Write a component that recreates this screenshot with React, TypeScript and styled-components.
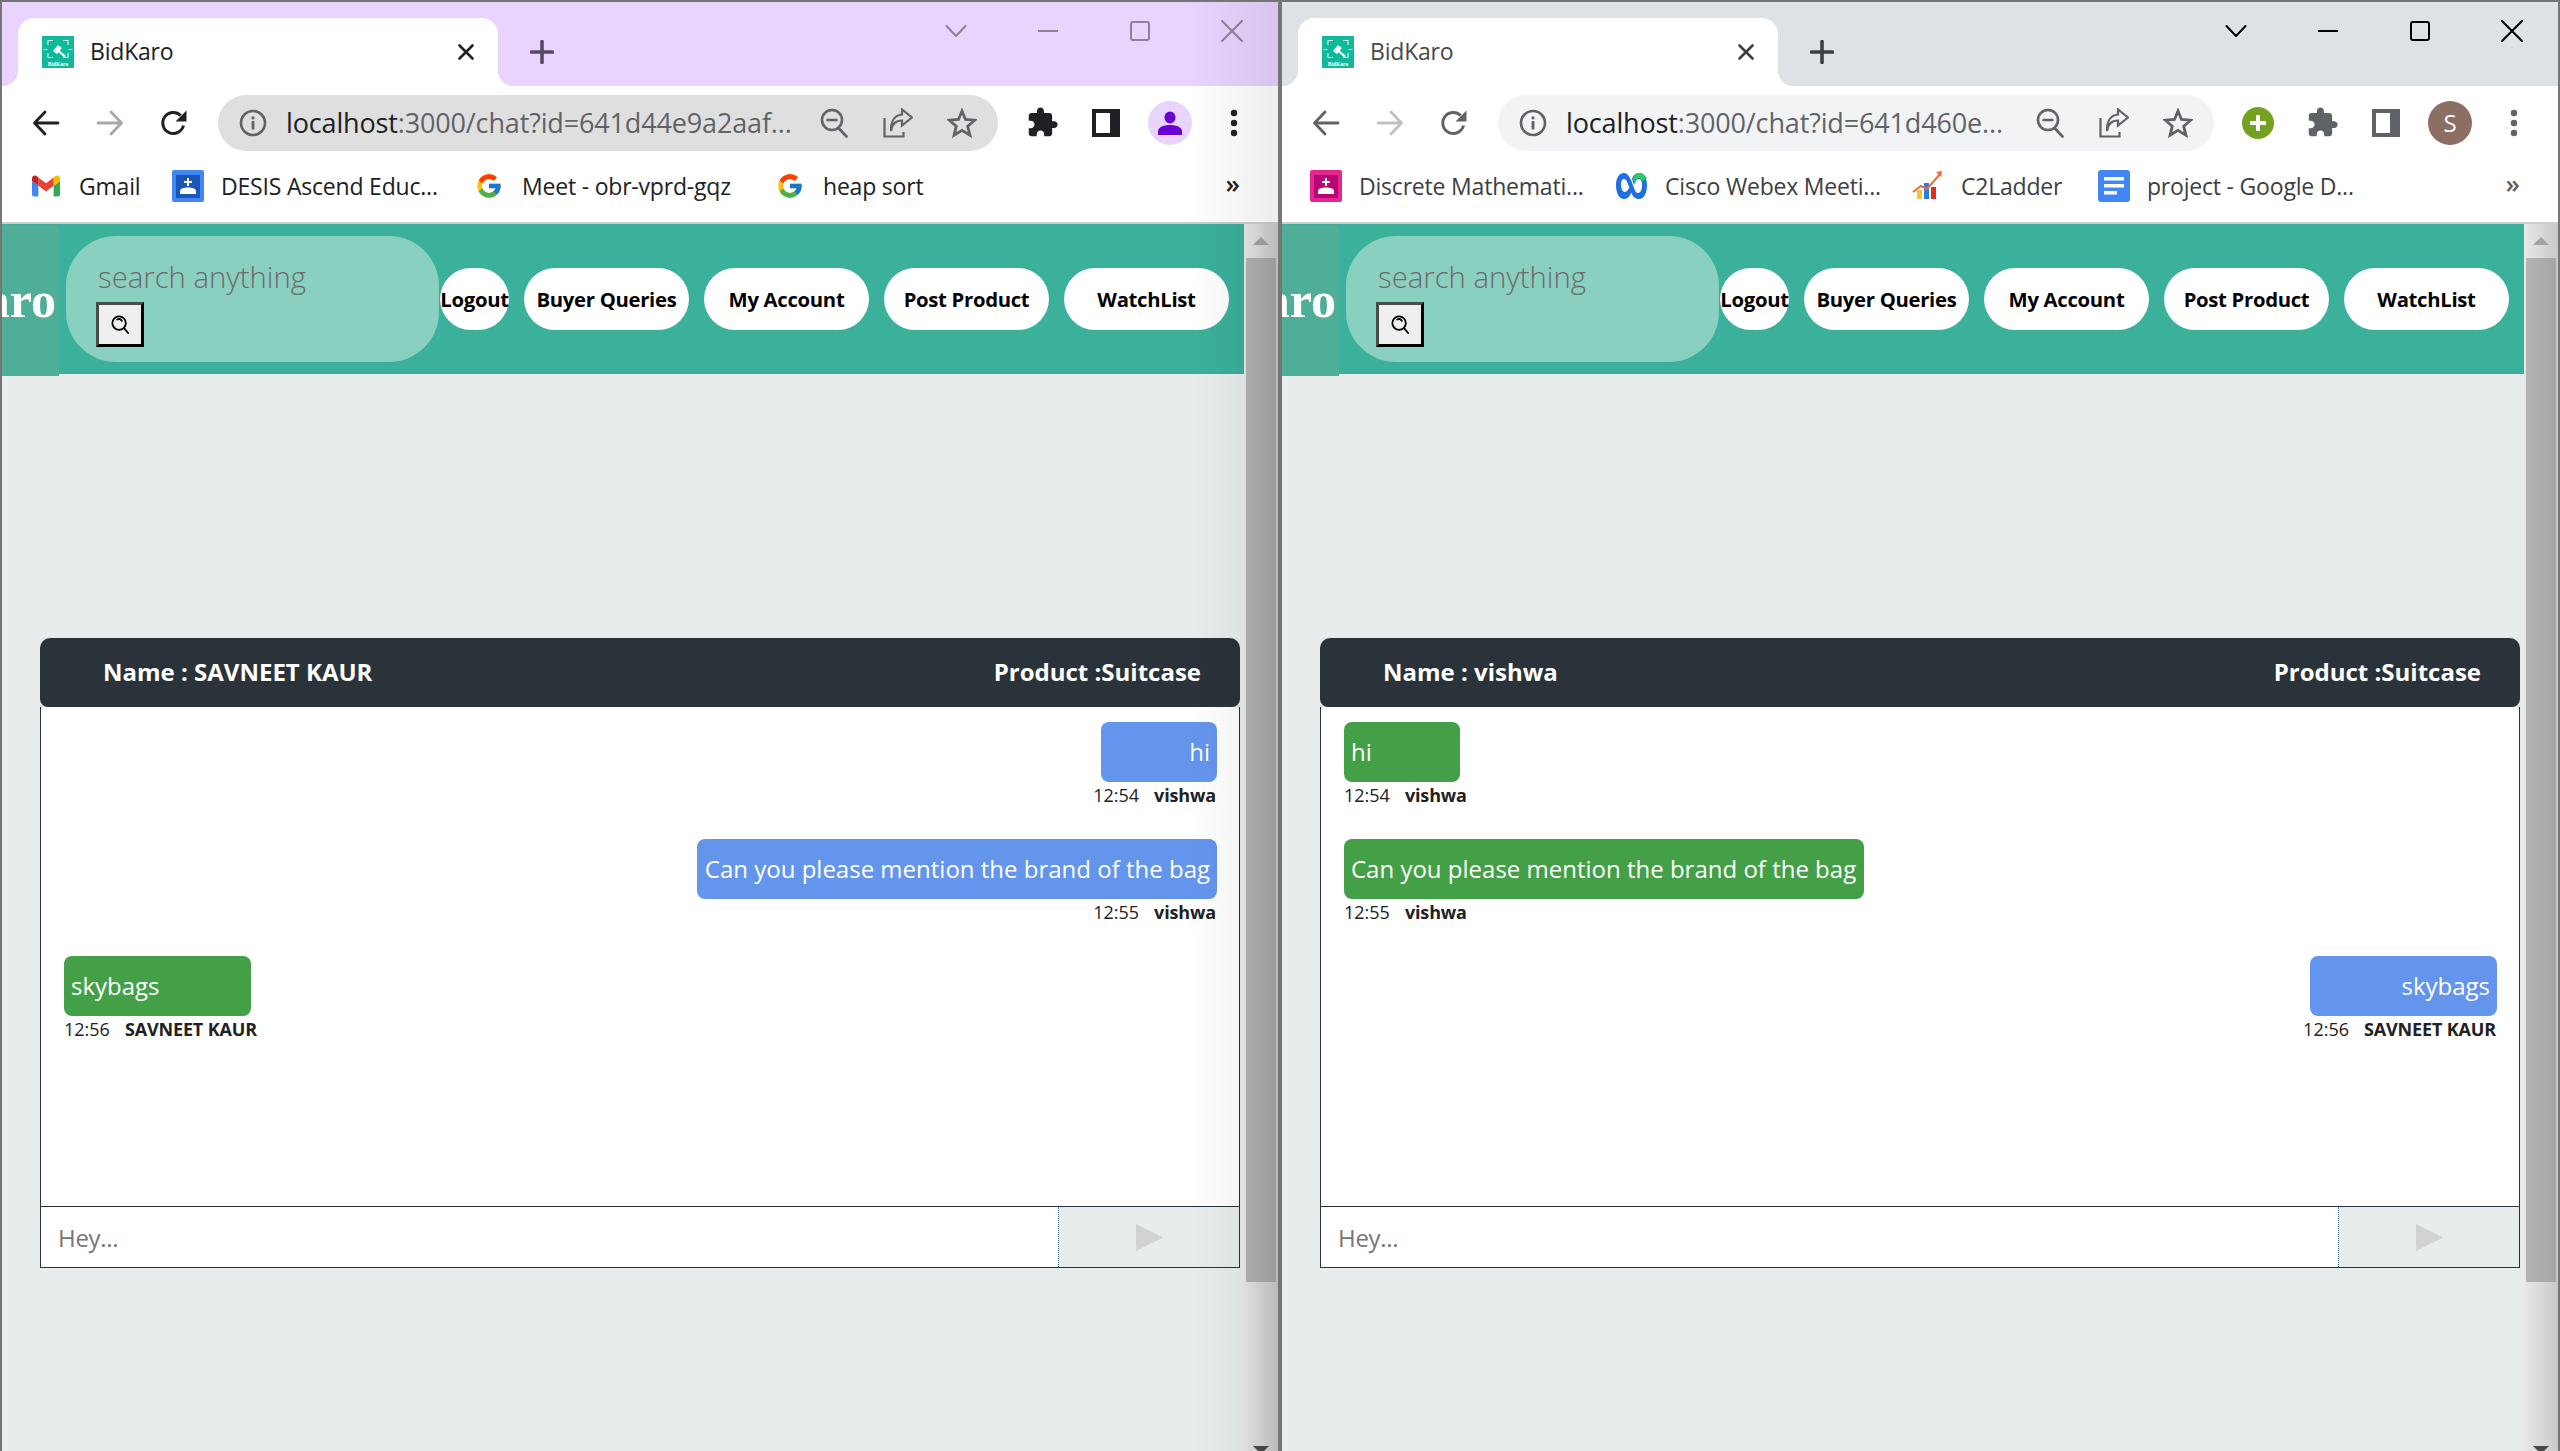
import React from 'react'
import styled, { createGlobalStyle } from 'styled-components'
import { FcGoogle } from 'react-icons/fc'

const GlobalStyle = createGlobalStyle`
  html, body {
    margin: 0;
    padding: 0;
    background: #e8ecec;
    overflow: hidden;
  }
  * {
    box-sizing: border-box;
  }
`

const UI_FONT = `"Open Sans", "Noto Sans", sans-serif`

const Desktop = styled.div`
  display: grid;
  grid-template-columns: 1280px 1280px;
  width: 2560px;
  height: 1451px;
  overflow: hidden;
  font-family: ${UI_FONT};
`

const Window = styled.div<{ $shaded?: boolean }>`
  position: relative;
  display: flex;
  flex-direction: column;
  height: 1451px;
  overflow: hidden;
  border: 2px solid #757575;
  border-bottom: none;

  &::after {
    content: '';
    display: ${(p) => (p.$shaded ? 'block' : 'none')};
    position: absolute;
    top: 0;
    right: 0;
    bottom: 0;
    width: 90px;
    pointer-events: none;
    background: linear-gradient(to right, rgba(0, 0, 0, 0), rgba(0, 0, 0, 0.07));
  }
`

const TitleBar = styled.div<{ $focused: boolean }>`
  display: flex;
  flex: 0 0 84px;
  align-items: flex-start;
  background: ${(p) => (p.$focused ? '#e8d4ff' : '#dee1e6')};
`

const Tab = styled.div<{ $focused: boolean }>`
  position: relative;
  display: flex;
  align-items: center;
  width: 480px;
  height: 68px;
  margin: 16px 0 0 16px;
  padding: 0 24px 0 24px;
  background: #fff;
  border-radius: 16px 16px 0 0;
  color: ${(p) => (p.$focused ? '#202124' : '#45494e')};

  &::before,
  &::after {
    content: '';
    position: absolute;
    bottom: 0;
    width: 16px;
    height: 16px;
  }
  &::before {
    left: -16px;
    background: radial-gradient(circle at 0 0, transparent 16px, #fff 16.5px);
  }
  &::after {
    right: -16px;
    background: radial-gradient(circle at 100% 0, transparent 16px, #fff 16.5px);
  }
`

const TabTitle = styled.span`
  flex: 1;
  margin-left: 16px;
  padding-bottom: 2px;
  font-size: 23px;
  letter-spacing: -0.2px;
`

const NewTab = styled.div`
  display: flex;
  align-items: center;
  justify-content: center;
  width: 40px;
  height: 68px;
  margin: 16px 0 0 24px;
`

const WindowControls = styled.div`
  display: flex;
  margin-left: auto;
`

const WindowControl = styled.div`
  display: flex;
  align-items: center;
  justify-content: center;
  width: 92px;
  height: 58px;
`

const Toolbar = styled.div`
  display: flex;
  flex: 0 0 73px;
  align-items: center;
  padding: 0 12px;
  background: #fff;
`

const ToolSlot = styled.div`
  display: flex;
  flex: 0 0 64px;
  align-items: center;
  justify-content: center;
  height: 56px;
`

const Omnibox = styled.div<{ $focused: boolean }>`
  display: flex;
  flex: 1;
  align-items: center;
  height: 56px;
  margin: 0 12px;
  padding: 0 4px 0 21px;
  border-radius: 28px;
  background: ${(p) => (p.$focused ? '#dfdfdf' : '#f1f3f4')};
`

const Url = styled.div`
  flex: 1;
  margin-left: 19px;
  color: #5f6368;
  font-size: 27px;
  letter-spacing: -0.15px;
  white-space: nowrap;
  overflow: hidden;

  b {
    font-weight: 400;
    color: #202124;
  }
`

const Avatar = styled.div<{ $bg: string }>`
  display: flex;
  align-items: center;
  justify-content: center;
  width: 44px;
  height: 44px;
  border-radius: 50%;
  background: ${(p) => p.$bg};
  color: #fff;
  font-size: 24px;
`

const GreenBadge = styled.div`
  display: flex;
  align-items: center;
  justify-content: center;
  width: 32px;
  height: 32px;
  border-radius: 50%;
  background: #74a11f;
`

const BookmarkBar = styled.div`
  display: flex;
  flex: 0 0 65px;
  align-items: center;
  padding: 0 0 10px 28px;
  background: #fff;
  border-bottom: 2px solid #cdcdcd;
`

const Bookmark = styled.div<{ $width: number; $focused: boolean }>`
  display: flex;
  flex: 0 0 ${(p) => p.$width}px;
  align-items: center;
  gap: 17px;
  color: ${(p) => (p.$focused ? '#202124' : '#3c4043')};
  font-size: 23px;
  letter-spacing: -0.2px;
  white-space: nowrap;
`

const BookmarkIcon = styled.div`
  display: flex;
  flex: 0 0 32px;
  align-items: center;
  justify-content: center;
  height: 32px;
`

const More = styled.div<{ $focused: boolean }>`
  margin-left: auto;
  margin-right: 38px;
  color: ${(p) => (p.$focused ? '#202124' : '#5f6368')};
  font-size: 26px;
  font-weight: 600;
  line-height: 1;
  padding-bottom: 6px;
`

const Viewport = styled.div`
  display: flex;
  flex: 1;
  min-height: 0;
  background: #e8ecec;
`

const Page = styled.div`
  flex: 0 0 1242px;
`

const Gutter = styled.div`
  flex: 0 0 34px;
  padding: 0 2px;
  background: linear-gradient(to right, #e9e9e9, #c9c9c9);
`

const ScrollButton = styled.div`
  display: flex;
  align-items: center;
  justify-content: center;
  height: 34px;
`

const ScrollArrow = styled.div<{ $down?: boolean }>`
  width: 0;
  height: 0;
  border-left: 8px solid transparent;
  border-right: 8px solid transparent;
  ${(p) =>
    p.$down ? 'border-top: 8px solid #4a4a4a;' : 'border-bottom: 8px solid #a3a3a3;'}
`

const ScrollThumb = styled.div`
  height: 1024px;
  background: linear-gradient(to right, #b4b4b4, #a6a6a6);
`

const ScrollTrack = styled.div`
  height: 151px;
`

const Header = styled.header`
  display: flex;
  align-items: center;
  height: 150px;
  background: #3bb09a;
`

const LogoBox = styled.div`
  display: flex;
  flex: 0 0 57px;
  align-self: flex-start;
  align-items: center;
  justify-content: flex-end;
  height: 150px;
  margin-top: 2px;
  overflow: hidden;
  background: #4eae98;
  color: #fff;
  font-family: "Liberation Serif", serif;
  font-size: 50px;
  font-weight: 700;
  white-space: nowrap;
  padding-right: 3px;
  padding-bottom: 2px;
`

const SearchPill = styled.form`
  display: flex;
  flex: 0 0 373px;
  flex-direction: column;
  align-items: flex-start;
  gap: 6px;
  height: 126px;
  margin-left: 7px;
  padding: 22px 0 0 30px;
  border-radius: 50px;
  background: #8ad0c0;
`

const SearchInput = styled.input`
  width: 300px;
  height: 38px;
  padding: 0 0 0 2px;
  border: none;
  outline: none;
  background: transparent;
  font-family: ${UI_FONT};
  font-size: 29.3px;
  font-weight: 300;

  &::placeholder {
    color: #6f6a6a;
    opacity: 1;
  }
`

const SearchButton = styled.button`
  display: flex;
  align-items: center;
  justify-content: center;
  width: 48px;
  height: 45px;
  padding: 0;
  border: 3px solid;
  border-color: #4c4c4c #000 #000 #4c4c4c;
  background: #efefef;
`

const NavList = styled.nav`
  display: flex;
  gap: 15px;
  margin-left: 1px;
`

const NavButton = styled.button<{ $compact?: boolean }>`
  flex: 0 0 ${(p) => (p.$compact ? '69px' : '165px')};
  height: 62px;
  padding: 0;
  border: none;
  border-radius: 31px;
  background: #fff;
  color: #000;
  font-family: ${UI_FONT};
  font-size: 20.3px;
  font-weight: 700;
  letter-spacing: -0.3px;
  white-space: nowrap;
  display: flex;
  align-items: center;
  justify-content: center;
`

const ChatPanel = styled.section`
  width: 1200px;
  margin: 264px 0 0 38px;
`

const ChatHeader = styled.div`
  display: flex;
  align-items: center;
  justify-content: space-between;
  height: 69px;
  padding: 0 39px 2px 63px;
  border-radius: 10px 10px 8px 8px;
  background: #2a3339;
  color: #fff;
  font-size: 24px;
  font-weight: 700;
`

const Messages = styled.div`
  display: flex;
  flex-direction: column;
  gap: 57px;
  height: 500px;
  padding: 15px 22px 15px 23px;
  background: #fff;
  border: 1px solid #2a3339;
  border-top: none;
`

const Message = styled.div<{ $own: boolean }>`
  display: flex;
  flex-direction: column;
  align-items: ${(p) => (p.$own ? 'flex-end' : 'flex-start')};
  height: 60px;
`

const Bubble = styled.div<{ $own: boolean; $width: number }>`
  flex: 0 0 60px;
  width: ${(p) => p.$width}px;
  padding: 0 7px;
  border-radius: 8px;
  background: ${(p) => (p.$own ? '#6495ed' : '#43a047')};
  color: #fff;
  font-size: 24px;
  line-height: 60px;
  text-align: ${(p) => (p.$own ? 'right' : 'left')};
  white-space: nowrap;
`

const Meta = styled.div<{ $own: boolean }>`
  display: flex;
  gap: 15px;
  margin-top: 1px;
  margin-right: ${(p) => (p.$own ? '1px' : '0')};
  color: #212121;
  font-size: 18px;
  line-height: 24px;
  white-space: nowrap;

  b {
    font-weight: 700;
    letter-spacing: -0.15px;
  }
`

const Composer = styled.form`
  display: flex;
  height: 61px;
  background: #fff;
  border: 1px solid #2a3339;
  border-top: none;
`

const ComposerInput = styled.input`
  flex: 1;
  min-width: 0;
  padding: 0 17px;
  border: none;
  outline: none;
  background: #fff;
  font-family: ${UI_FONT};
  font-size: 24px;
  letter-spacing: -0.3px;

  &::placeholder {
    color: #757575;
    opacity: 1;
  }
`

const SendButton = styled.button`
  display: flex;
  flex: 0 0 181px;
  align-items: center;
  justify-content: center;
  padding: 0;
  border: none;
  border-left: 1px dotted #3f7a9a;
  background: #e8ecec;
`

const Stroke = styled.svg<{ $color: string }>`
  display: block;
  fill: none;
  stroke: ${(p) => p.$color};
  stroke-linecap: round;
  stroke-linejoin: round;
`

const Solid = styled.svg<{ $color: string }>`
  display: block;
  fill: ${(p) => p.$color};
`

const Favicon = () => (
  <svg width="32" height="32" viewBox="0 0 32 32">
    <rect width="32" height="32" fill="#12b89c" />
    <g fill="none" stroke="#cfeee8" strokeWidth="1.2">
      <path d="M6 9V4.500h5M21 4.500h5V9M6 17v4.500h5M21 21.500h5V17" />
      <path d="M1.500 13.500h4M26.500 13.500h4" />
    </g>
    <g fill="#fff">
      <path d="M11 15l5-6 4 3-5 6z" />
      <path d="M17 14l7 6-1.500 1.500-7-6z" />
    </g>
    <text x="16" y="29.500" fontSize="5.500" fontWeight="700" fontFamily="Liberation Serif, serif" fill="#fff" textAnchor="middle">
      BidKaro
    </text>
  </svg>
)

const CloseIcon = ({ color }: { color: string }) => (
  <Stroke $color={color} width="16" height="16" viewBox="0 0 16 16" strokeWidth="2.6">
    <path d="M1.500 1.500l13 13M14.500 1.500l-13 13" />
  </Stroke>
)

const PlusIcon = ({ color }: { color: string }) => (
  <Stroke $color={color} width="24" height="24" viewBox="0 0 24 24" strokeWidth="3.600">
    <path d="M12 1.500v21M1.500 12h21" />
  </Stroke>
)

const ChevronIcon = ({ color }: { color: string }) => (
  <Stroke $color={color} width="22" height="14" viewBox="0 0 22 14" strokeWidth="2">
    <path d="M1.500 2l9.500 10 9.500-10" />
  </Stroke>
)

const MinimizeIcon = ({ color }: { color: string }) => (
  <Stroke $color={color} width="20" height="4" viewBox="0 0 20 4" strokeWidth="2">
    <path d="M0 2h20" />
  </Stroke>
)

const MaximizeIcon = ({ color }: { color: string }) => (
  <Stroke $color={color} width="20" height="20" viewBox="0 0 20 20" strokeWidth="2">
    <rect x="1" y="1" width="18" height="18" rx="2" />
  </Stroke>
)

const WinCloseIcon = ({ color }: { color: string }) => (
  <Stroke $color={color} width="22" height="22" viewBox="0 0 22 22" strokeWidth="2">
    <path d="M1 1l20 20M21 1L1 21" />
  </Stroke>
)

const BackIcon = ({ color }: { color: string }) => (
  <Stroke $color={color} width="28" height="28" viewBox="0 0 28 28" strokeWidth="2.800">
    <path d="M26 14H2.500M13 3L2.500 14 13 25" />
  </Stroke>
)

const ForwardIcon = ({ color }: { color: string }) => (
  <Stroke $color={color} width="28" height="28" viewBox="0 0 28 28" strokeWidth="2.800">
    <path d="M2 14h23.500M15 3l10.500 11L15 25" />
  </Stroke>
)

const ReloadIcon = ({ color }: { color: string }) => (
  <svg width="28" height="28" viewBox="0 0 28 28">
    <path d="M23.500 16.500a10.500 10.500 0 1 1-2.800-10" fill="none" stroke={color} strokeWidth="3" />
    <path d="M26.500 1.500v11h-11z" fill={color} />
  </svg>
)

const InfoIcon = () => (
  <svg width="28" height="28" viewBox="0 0 28 28">
    <circle cx="14" cy="14" r="12" fill="none" stroke="#5f6368" strokeWidth="2.600" />
    <rect x="12.600" y="12" width="2.800" height="8.500" fill="#5f6368" />
    <rect x="12.600" y="7.500" width="2.800" height="2.800" fill="#5f6368" />
  </svg>
)

const ZoomOutIcon = () => (
  <Stroke $color="#5f6368" width="28" height="30" viewBox="0 0 28 30" strokeWidth="2.600">
    <circle cx="12" cy="12" r="10" />
    <path d="M18.500 20l8 8.500M7.500 12h9" />
  </Stroke>
)

const ShareIcon = () => (
  <Stroke $color="#5f6368" width="30" height="30" viewBox="0 0 30 30" strokeWidth="2.200" style={{ strokeLinecap: 'butt', strokeLinejoin: 'miter' }}>
    <path d="M1.500 10v18.500h19V24" />
    <path d="M8 23c1-7 5-10.500 11-10.500V17.500L29 9.500 19 1.500V6.500C11 7.500 7.500 14 8 23z" />
  </Stroke>
)

const StarIcon = () => (
  <Stroke $color="#5f6368" width="30" height="30" viewBox="0 0 30 30" strokeWidth="2.800" style={{ strokeLinejoin: 'miter' }}>
    <path d="M15 3l3.500 8.500 9.200.7-7 6 2.200 9L15 22.400 7.100 27.200l2.200-9-7-6 9.200-.7z" />
  </Stroke>
)

const PuzzleIcon = ({ color }: { color: string }) => (
  <Solid $color={color} width="33" height="33" viewBox="0 0 24 24">
    <path d="M20.500 11H19V7c0-1.100-.9-2-2-2h-4V3.500C13 2.120 11.880 1 10.500 1S8 2.120 8 3.500V5H4c-1.100 0-1.990.9-1.990 2v3.800H3.500c1.490 0 2.700 1.210 2.700 2.700s-1.210 2.700-2.700 2.700H2V20c0 1.100.9 2 2 2h3.800v-1.500c0-1.490 1.210-2.700 2.700-2.700 1.490 0 2.700 1.210 2.700 2.700V22H17c1.100 0 2-.9 2-2v-4h1.500c1.380 0 2.500-1.120 2.500-2.500S21.880 11 20.500 11z" />
  </Solid>
)

const SidePanelIcon = ({ color }: { color: string }) => (
  <svg width="28" height="28" viewBox="0 0 28 28">
    <rect width="28" height="28" fill={color} />
    <rect x="4" y="4" width="14" height="20" fill="#fff" />
  </svg>
)

const MenuIcon = ({ color }: { color: string }) => (
  <Solid $color={color} width="8" height="28" viewBox="0 0 8 28">
    <circle cx="4" cy="4" r="3.200" />
    <circle cx="4" cy="14" r="3.200" />
    <circle cx="4" cy="24" r="3.200" />
  </Solid>
)

const PersonIcon = () => (
  <Solid $color="#6a00d4" width="26" height="26" viewBox="0 0 26 26">
    <ellipse cx="13" cy="7.500" rx="5.500" ry="6" />
    <path d="M1 25v-3.500C1 17 7 15 13 15s12 2 12 6.500V25z" />
  </Solid>
)

const GmailIcon = () => (
  <svg width="28" height="22" viewBox="52 42 88 66">
    <path fill="#4285f4" d="M58 108h14V74L52 59v43c0 3.320 2.690 6 6 6" />
    <path fill="#34a853" d="M120 108h14c3.320 0 6-2.690 6-6V59l-20 15" />
    <path fill="#fbbc04" d="M120 48v26l20-15v-8c0-7.420-8.470-11.650-14.400-7.200" />
    <path fill="#ea4335" d="M72 74V48l24 18 24-18v26L96 92" />
    <path fill="#c5221f" d="M52 51v8l20 15V48l-5.600-4.200c-5.940-4.450-14.400-.22-14.400 7.200" />
  </svg>
)

const ContactIcon = ({ outer, inner }: { outer: string; inner: string }) => (
  <svg width="32" height="32" viewBox="0 0 32 32">
    <rect width="32" height="32" rx="2" fill={outer} />
    <rect x="4" y="5" width="24" height="23" fill={inner} />
    <path d="M15 8h2v8h-2zM12 11h8v2h-8z" fill="#fff" />
    <path d="M8 24v-3c0-2.500 4-3.500 8-3.500s8 1 8 3.500v3z" fill="#fff" />
  </svg>
)

const WebexIcon = () => (
  <svg width="32" height="32" viewBox="0 0 32 32">
    <path d="M8 3C3 3 0 8 0 15c0 8 3 14 8 14 4 0 6-3 8-8l-2-6c-1 4-3 7-5 7-3 0-4-4-4-8 0-3 1-5 3-5 2 0 3 2 4 5l3 8c2 5 4 7 8 7 5 0 8-6 8-14 0-7-3-12-8-12-4 0-6 3-7 6l2 6c1-4 3-6 5-6s3 3 3 6c0 4-1 8-4 8-2 0-3-2-4-5l-3-8C13 6 11 3 8 3z" fill="#1e6fe0" />
    <path d="M17 9c1-3 3-6 7-6 3 0 5 2 7 5l-5 3c-1-2-2-3-3-3-2 0-3 2-4 6z" fill="#30c96a" />
  </svg>
)

const LadderIcon = () => (
  <svg width="32" height="32" viewBox="0 0 32 32">
    <rect x="5" y="20" width="5" height="9" fill="#f4c430" />
    <rect x="12" y="13" width="5" height="16" fill="#2b7de9" />
    <rect x="19" y="17" width="5" height="12" fill="#d93025" />
    <path d="M1 22l8-6 6 3L29 3" fill="none" stroke="#f26b3a" strokeWidth="2" />
    <path d="M24 2l6-1-1 6z" fill="#f26b3a" />
  </svg>
)

const DocsIcon = () => (
  <svg width="32" height="32" viewBox="0 0 32 32">
    <rect width="32" height="32" rx="3" fill="#4285f4" />
    <rect x="6" y="7" width="20" height="3.500" fill="#fff" />
    <rect x="6" y="14" width="20" height="3.500" fill="#fff" />
    <rect x="6" y="21" width="13" height="3.500" fill="#fff" />
  </svg>
)

const LensIcon = () => (
  <Stroke $color="#000" width="18" height="19" viewBox="0 0 20 21" strokeWidth="2">
    <circle cx="9" cy="9" r="7.500" />
    <path d="M14.500 14.500L19 20M7 5c2-1 4-.5 5 1.500" />
  </Stroke>
)

const SendIcon = () => (
  <svg width="27" height="27" viewBox="0 0 27 27">
    <path d="M0 0l27 13.500L0 27z" fill="#d2d2d2" />
  </svg>
)

type ChatMessage = { text: string; own: boolean; width: number; time: string; author: string }

type WindowData = {
  focused: boolean
  url: string
  partner: string
  badge?: boolean
  bookmarks: { label: string; width: number; icon: React.ReactNode }[]
  messages: ChatMessage[]
}

const mine = (own: boolean): ChatMessage[] => [
  { text: 'hi', own, width: 116, time: '12:54', author: 'vishwa' },
  { text: 'Can you please mention the brand of the bag', own, width: 520, time: '12:55', author: 'vishwa' },
  { text: 'skybags', own: !own, width: 187, time: '12:56', author: 'SAVNEET KAUR' },
]

const windows: WindowData[] = [
  {
    focused: true,
    url: ':3000/chat?id=641d44e9a2aaf...',
    partner: 'SAVNEET KAUR',
    bookmarks: [
      { label: 'Gmail', width: 142, icon: <GmailIcon /> },
      { label: 'DESIS Ascend Educ...', width: 301, icon: <ContactIcon outer="#4285f4" inner="#1a56b8" /> },
      { label: 'Meet - obr-vprd-gqz', width: 301, icon: <FcGoogle size={28} /> },
      { label: 'heap sort', width: 200, icon: <FcGoogle size={28} /> },
    ],
    messages: mine(true),
  },
  {
    focused: false,
    url: ':3000/chat?id=641d460e...',
    partner: 'vishwa',
    badge: true,
    bookmarks: [
      { label: 'Discrete Mathemati...', width: 306, icon: <ContactIcon outer="#e52592" inner="#b80672" /> },
      { label: 'Cisco Webex Meeti...', width: 296, icon: <WebexIcon /> },
      { label: 'C2Ladder', width: 186, icon: <LadderIcon /> },
      { label: 'project - Google D...', width: 300, icon: <DocsIcon /> },
    ],
    messages: mine(false),
  },
]

const NAV_ITEMS = ['Buyer Queries', 'My Account', 'Post Product', 'WatchList']

const BrowserWindow = ({ data }: { data: WindowData }) => {
  const { focused } = data
  const ink = focused ? '#202124' : '#5f6368'
  const control = focused ? '#8f8199' : '#000'

  return (
    <Window $shaded={focused}>
      <TitleBar $focused={focused}>
        <Tab $focused={focused}>
          <Favicon />
          <TabTitle>BidKaro</TabTitle>
          <CloseIcon color={focused ? '#202124' : '#3c4043'} />
        </Tab>
        <NewTab>
          <PlusIcon color={focused ? '#544a63' : '#3c4043'} />
        </NewTab>
        <WindowControls>
          <WindowControl><ChevronIcon color={control} /></WindowControl>
          <WindowControl><MinimizeIcon color={control} /></WindowControl>
          <WindowControl><MaximizeIcon color={control} /></WindowControl>
          <WindowControl><WinCloseIcon color={control} /></WindowControl>
        </WindowControls>
      </TitleBar>

      <Toolbar>
        <ToolSlot><BackIcon color={ink} /></ToolSlot>
        <ToolSlot><ForwardIcon color={focused ? '#a8a8a8' : '#bdc1c6'} /></ToolSlot>
        <ToolSlot><ReloadIcon color={ink} /></ToolSlot>
        <Omnibox $focused={focused}>
          <InfoIcon />
          <Url><b>localhost</b>{data.url}</Url>
          <ToolSlot><ZoomOutIcon /></ToolSlot>
          <ToolSlot><ShareIcon /></ToolSlot>
          <ToolSlot><StarIcon /></ToolSlot>
        </Omnibox>
        {data.badge && (
          <ToolSlot>
            <GreenBadge>
              <Stroke $color="#fff" width="18" height="18" viewBox="0 0 18 18" strokeWidth="4" style={{ strokeLinecap: 'butt' }}>
                <path d="M9 1v16M1 9h16" />
              </Stroke>
            </GreenBadge>
          </ToolSlot>
        )}
        <ToolSlot><PuzzleIcon color={ink} /></ToolSlot>
        <ToolSlot><SidePanelIcon color={ink} /></ToolSlot>
        <ToolSlot>
          {focused ? (
            <Avatar $bg="#e8d4ff"><PersonIcon /></Avatar>
          ) : (
            <Avatar $bg="#8d6e63">S</Avatar>
          )}
        </ToolSlot>
        <ToolSlot><MenuIcon color={ink} /></ToolSlot>
      </Toolbar>

      <BookmarkBar>
        {data.bookmarks.map((item) => (
          <Bookmark key={item.label} $width={item.width} $focused={focused}>
            <BookmarkIcon>{item.icon}</BookmarkIcon>
            {item.label}
          </Bookmark>
        ))}
        <More $focused={focused}>»</More>
      </BookmarkBar>

      <Viewport>
        <Page>
          <Header>
            <LogoBox>BidKaro</LogoBox>
            <SearchPill>
              <SearchInput placeholder="search anything" />
              <SearchButton type="button"><LensIcon /></SearchButton>
            </SearchPill>
            <NavList>
              <NavButton $compact>Logout</NavButton>
              {NAV_ITEMS.map((label) => (
                <NavButton key={label}>{label}</NavButton>
              ))}
            </NavList>
          </Header>

          <ChatPanel>
            <ChatHeader>
              <span>Name : {data.partner}</span>
              <span>Product :Suitcase</span>
            </ChatHeader>
            <Messages>
              {data.messages.map((msg) => (
                <Message key={msg.text} $own={msg.own}>
                  <Bubble $own={msg.own} $width={msg.width}>{msg.text}</Bubble>
                  <Meta $own={msg.own}>
                    <span>{msg.time}</span>
                    <b>{msg.author}</b>
                  </Meta>
                </Message>
              ))}
            </Messages>
            <Composer>
              <ComposerInput placeholder="Hey..." />
              <SendButton type="button"><SendIcon /></SendButton>
            </Composer>
          </ChatPanel>
        </Page>
        <Gutter>
          <ScrollButton><ScrollArrow /></ScrollButton>
          <ScrollThumb />
          <ScrollTrack />
          <ScrollButton><ScrollArrow $down /></ScrollButton>
        </Gutter>
      </Viewport>
    </Window>
  )
}

const App = () => (
  <>
    <GlobalStyle />
    <Desktop>
      {windows.map((data) => (
        <BrowserWindow key={data.partner} data={data} />
      ))}
    </Desktop>
  </>
)

export default App
